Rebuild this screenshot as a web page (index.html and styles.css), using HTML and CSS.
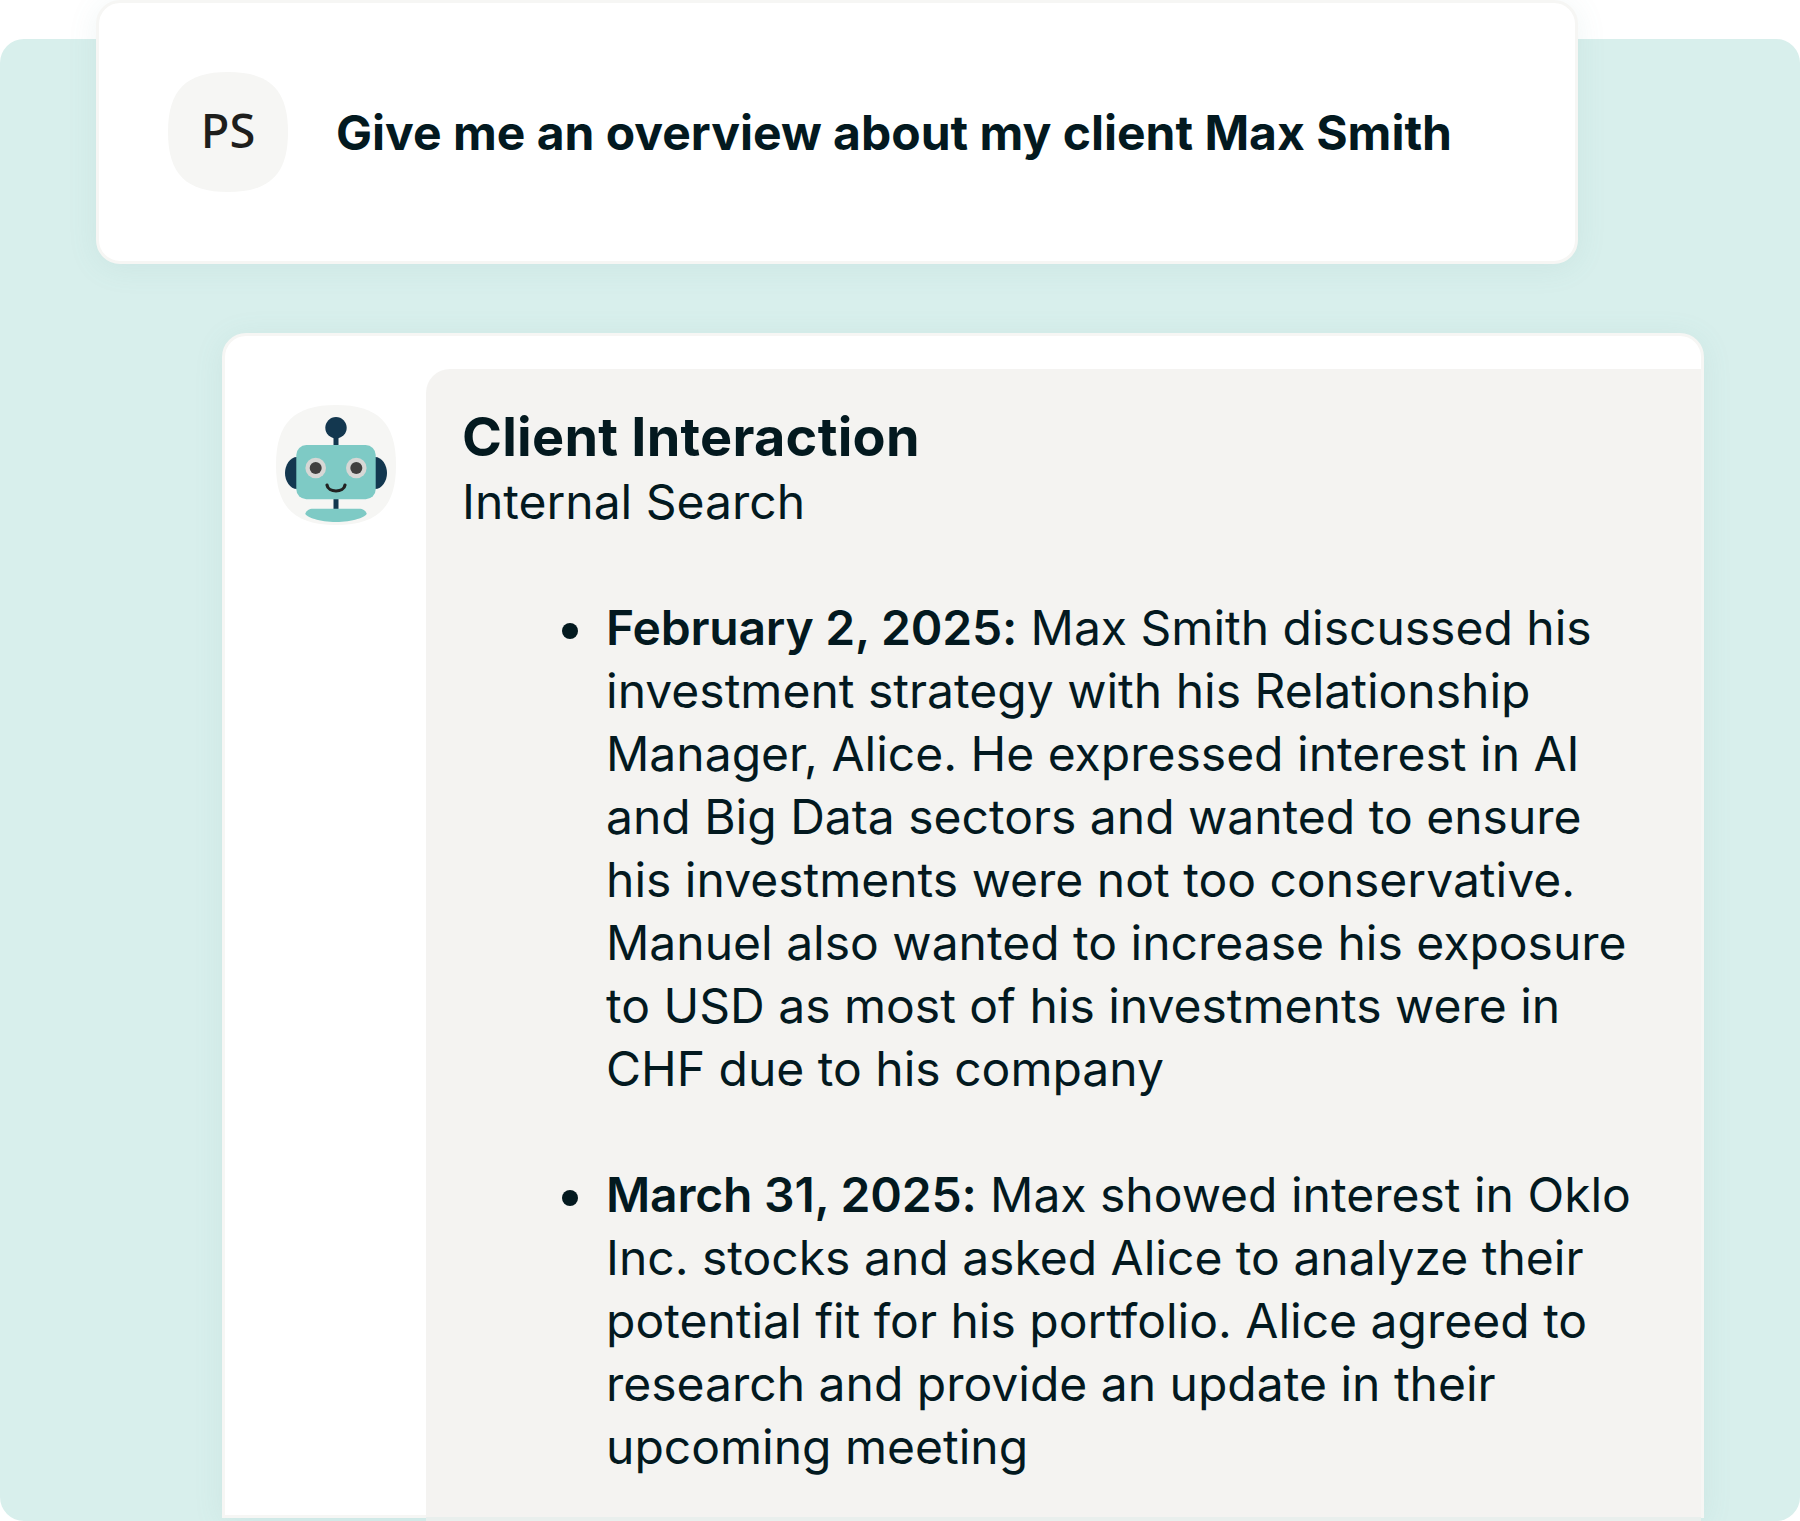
FILE: index.html
```html
<!DOCTYPE html>
<html lang="en">
<head>
  <meta charset="UTF-8" />
  <title>Client Interaction</title>
  <link rel="stylesheet" href="styles.css">
</head>
<body>
  <div class="panel">
    <div class="card question">
      <div class="avatar">PS</div>
      <h1>Give me an overview about my client Max Smith</h1>
    </div>

    <div class="card answer">
      <div class="avatar bot">
        <svg width="120" height="120" viewBox="0 0 120 120">
          <rect x="57.5" y="22" width="5" height="20" fill="#13374f"/>
          <circle cx="60" cy="22.7" r="10.7" fill="#13374f"/>
          <rect x="57.5" y="92" width="5" height="13" fill="#13374f"/>
          <path d="M21 52 C14 52 9 60 9 68 C9 76 14 84 21 84 Z" fill="#13374f"/>
          <path d="M99 52 C106 52 111 60 111 68 C111 76 106 84 99 84 Z" fill="#13374f"/>
          <rect x="20.3" y="40" width="79.4" height="54.3" rx="10" fill="#7ecac5"/>
          <circle cx="39.7" cy="63" r="10.3" fill="#d7d7d5"/>
          <circle cx="39.7" cy="63" r="6" fill="#403f3e"/>
          <circle cx="80.3" cy="63" r="10.3" fill="#d7d7d5"/>
          <circle cx="80.3" cy="63" r="6" fill="#403f3e"/>
          <path d="M51 80 C52 88 68 88 69 80" fill="none" stroke="#222" stroke-width="3.2" stroke-linecap="round"/>
          <path d="M29.3 108.5 C30.5 105.5 33 103.7 37 103.7 H83 C87 103.7 89.5 105.5 90.7 108.5 C90.7 112 76 117 60 117 C44 117 29.3 112 29.3 108.5 Z" fill="#7ecac5"/>
        </svg>
      </div>
      <div class="bubble">
        <h2>Client Interaction</h2>
        <p class="sub">Internal Search</p>
        <ul>
          <li><b>February 2, 2025:</b> Max Smith discussed his investment strategy with his Relationship Manager, Alice. He expressed interest in AI and Big Data sectors and wanted to ensure his investments were not too conservative. Manuel also wanted to increase his exposure to USD as most of his investments were in CHF due to his company</li>
          <li><b>March 31, 2025:</b> Max showed interest in Oklo Inc. stocks and asked Alice to analyze their potential fit for his portfolio. Alice agreed to research and provide an update in their upcoming meeting</li>
        </ul>
      </div>
    </div>
  </div>
</body>
</html>
```

FILE: styles.css
```css
html, body {
  margin: 0;
  padding: 0;
  background: #fff;
}
body {
  width: 1800px;
  height: 1521px;
  overflow: hidden;
  padding-top: 39px;
  box-sizing: border-box;
  font-family: Inter, "Liberation Sans", sans-serif;
  font-optical-sizing: none;
  color: #03191f;
}
.panel {
  height: 1482px;
  background-color: #d8efec;
  border-radius: 24px;
  padding: 0 96px;
  box-sizing: border-box;
}
.card {
  width: 1482px;
  box-sizing: border-box;
  background-color: #fff;
  border: 3px solid #f6f6f4;
  border-radius: 24px;
  box-shadow: 0 4px 30px rgba(100, 160, 155, 0.1);
  display: flex;
}
.question {
  position: relative;
  top: -39px;
  height: 264px;
  padding: 69px;
  align-items: center;
  margin-bottom: 30px;
}
.avatar {
  flex: none;
  width: 120px;
  height: 120px;
  clip-path: path("M60 0 C102 0 120 18 120 60 C120 102 102 120 60 120 C18 120 0 102 0 60 C0 18 18 0 60 0 Z");
  background-color: #f6f6f4;
  display: flex;
  align-items: center;
  justify-content: center;
  padding-bottom: 5px;
  box-sizing: border-box;
  font-family: "Noto Sans", sans-serif;
  font-size: 47px;
  font-weight: 500;
  color: #1e1e1c;
}
h1 {
  margin: 0 0 0 48px;
  font-size: 48px;
  font-weight: 700;
  white-space: nowrap;
}
.answer {
  margin-left: 126px;
  height: 1185px;
  padding: 33px 0 0 0;
  border-radius: 24px 24px 0 0;
  border-bottom-width: 3px;
}
.bot {
  padding: 0;
  margin: 36px 30px 0 51px;
}
.bubble {
  flex: 1;
  background: linear-gradient(#f4f3f1 0 calc(100% - 4px), #e9efed 0);
  border-radius: 24px 0 0 0;
  padding: 35px 60px 0 36px;
  margin-bottom: -6px;
}
h2 {
  margin: 0;
  font-size: 54px;
  font-weight: 700;
  line-height: 66px;
  letter-spacing: 0.25px;
}
.sub {
  margin: 0;
  font-size: 48px;
  line-height: 63px;
}
ul {
  margin: 63px 0 0 0;
  padding: 0 0 0 144px;
  font-size: 48px;
  line-height: 63px;
  list-style: none;
}
li {
  position: relative;
  margin-bottom: 63px;
}
li::before {
  content: "";
  position: absolute;
  left: -44px;
  top: 27px;
  width: 16px;
  height: 16px;
  border-radius: 50%;
  background-color: #03191f;
}
b {
  font-weight: 600;
  letter-spacing: -0.2px;
}
```
